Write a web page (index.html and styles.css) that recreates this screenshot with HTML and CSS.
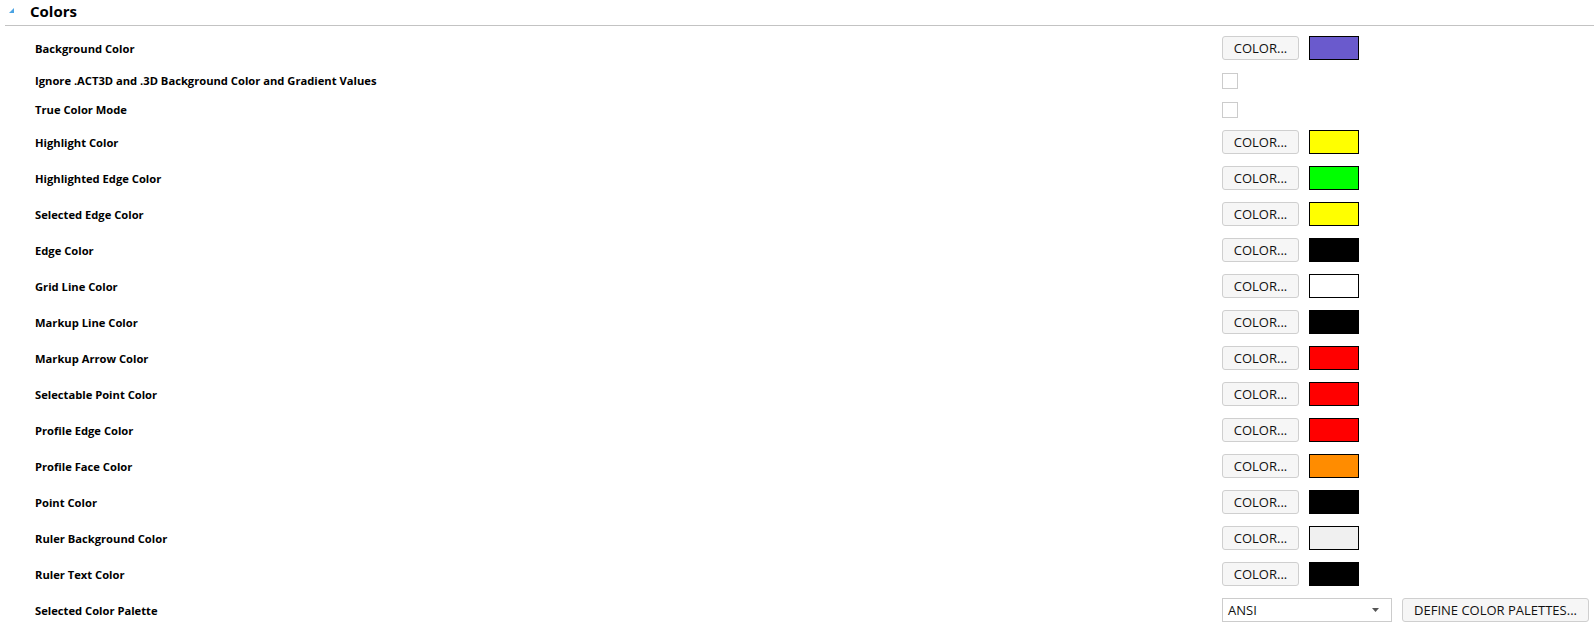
FILE: index.html
```html
<!DOCTYPE html>
<html>
<head>
<meta charset="utf-8">
<link rel="stylesheet" href="styles.css">
</head>
<body>
<div class="panel">
  <div class="header">
    <svg class="caret" width="6" height="6" viewBox="0 0 6 6"><polygon points="5,0 5,5 0,5" fill="#4ba3e3"/></svg>
    <span class="title">Colors</span>
  </div>
  <div class="rows">
    <div class="row tall"><span class="label">Background Color</span><div class="ctrls"><button class="btn">COLOR...</button><span class="swatch" style="background:#6a5acd"></span></div></div>
    <div class="row short"><span class="label">Ignore .ACT3D and .3D Background Color and Gradient Values</span><div class="ctrls"><span class="check"></span></div></div>
    <div class="row short"><span class="label">True Color Mode</span><div class="ctrls"><span class="check"></span></div></div>
    <div class="row tall"><span class="label">Highlight Color</span><div class="ctrls"><button class="btn">COLOR...</button><span class="swatch" style="background:#ffff00"></span></div></div>
    <div class="row tall"><span class="label">Highlighted Edge Color</span><div class="ctrls"><button class="btn">COLOR...</button><span class="swatch" style="background:#00ff00"></span></div></div>
    <div class="row tall"><span class="label">Selected Edge Color</span><div class="ctrls"><button class="btn">COLOR...</button><span class="swatch" style="background:#ffff00"></span></div></div>
    <div class="row tall"><span class="label">Edge Color</span><div class="ctrls"><button class="btn">COLOR...</button><span class="swatch" style="background:#000000"></span></div></div>
    <div class="row tall"><span class="label">Grid Line Color</span><div class="ctrls"><button class="btn">COLOR...</button><span class="swatch" style="background:#ffffff"></span></div></div>
    <div class="row tall"><span class="label">Markup Line Color</span><div class="ctrls"><button class="btn">COLOR...</button><span class="swatch" style="background:#000000"></span></div></div>
    <div class="row tall"><span class="label">Markup Arrow Color</span><div class="ctrls"><button class="btn">COLOR...</button><span class="swatch" style="background:#ff0000"></span></div></div>
    <div class="row tall"><span class="label">Selectable Point Color</span><div class="ctrls"><button class="btn">COLOR...</button><span class="swatch" style="background:#ff0000"></span></div></div>
    <div class="row tall"><span class="label">Profile Edge Color</span><div class="ctrls"><button class="btn">COLOR...</button><span class="swatch" style="background:#ff0000"></span></div></div>
    <div class="row tall"><span class="label">Profile Face Color</span><div class="ctrls"><button class="btn">COLOR...</button><span class="swatch" style="background:#ff8c00"></span></div></div>
    <div class="row tall"><span class="label">Point Color</span><div class="ctrls"><button class="btn">COLOR...</button><span class="swatch" style="background:#000000"></span></div></div>
    <div class="row tall"><span class="label">Ruler Background Color</span><div class="ctrls"><button class="btn">COLOR...</button><span class="swatch" style="background:#f0f0f0"></span></div></div>
    <div class="row tall"><span class="label">Ruler Text Color</span><div class="ctrls"><button class="btn">COLOR...</button><span class="swatch" style="background:#000000"></span></div></div>
    <div class="row tall"><span class="label">Selected Color Palette</span><div class="ctrls">
      <div class="select"><span>ANSI</span><svg width="7" height="4" viewBox="0 0 7 4"><polygon points="0,0 7,0 3.5,4" fill="#555"/></svg></div>
      <button class="btn wide">DEFINE COLOR PALETTES...</button>
    </div></div>
  </div>
</div>
</body>
</html>
```

FILE: styles.css
```css
html, body {
  margin: 0;
  padding: 0;
  background: #ffffff;
}
body {
  font-family: "Open Sans", "Noto Sans", sans-serif;
  color: #000;
  width: 1594px;
  height: 628px;
  overflow: hidden;
}
.header {
  margin-left: 5px;
  border-bottom: 1px solid #c3c3c3;
  display: flex;
  align-items: center;
  box-sizing: border-box;
  height: 26px;
}
.caret {
  margin-left: 4px;
  margin-top: -4px;
  margin-right: 15px;
}
.title {
  font-weight: 700;
  font-size: 15px;
  margin-top: -3px;
}
.rows {
  padding-top: 4px;
}
.row {
  display: grid;
  grid-template-columns: 1fr 372px;
  align-items: center;
  padding-left: 35px;
}
.row.tall { height: 36px; }
.row.short { height: 29px; }
.label {
  font-weight: 700;
  font-size: 11.2px;
}
.ctrls {
  display: flex;
  align-items: center;
  gap: 10px;
}
.btn {
  height: 24px;
  width: 77px;
  padding: 0;
  border: 1px solid #cfcfcf;
  border-radius: 3px;
  background: #f6f6f6;
  font-family: "Open Sans", "Noto Sans", sans-serif;
  font-size: 13px;
  color: #111;
  box-sizing: border-box;
}
.btn.wide {
  width: 187px;
}
.swatch {
  width: 50px;
  height: 24px;
  border: 1px solid #000;
  box-sizing: border-box;
}
.check {
  width: 16px;
  height: 16px;
  border: 1px solid #cccccc;
  box-sizing: border-box;
  background: #fff;
}
.select {
  width: 170px;
  height: 24px;
  border: 1px solid #cccccc;
  box-sizing: border-box;
  display: flex;
  align-items: center;
  justify-content: space-between;
  padding: 0 12px 0 5px;
  font-size: 13px;
  color: #111;
}
```
